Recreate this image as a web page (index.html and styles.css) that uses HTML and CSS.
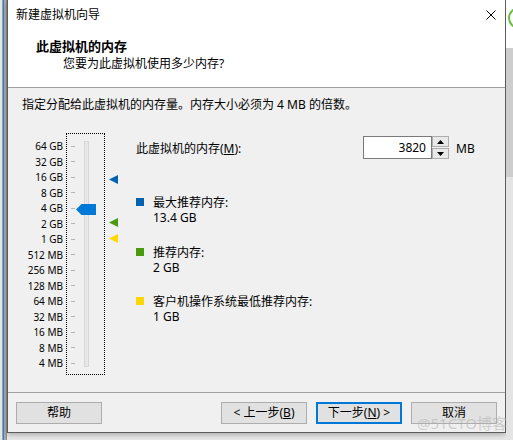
FILE: index.html
```html
<!DOCTYPE html>
<html lang="zh-CN">
<head>
<meta charset="utf-8">
<title>新建虚拟机向导</title>
<link rel="stylesheet" href="styles.css">
</head>
<body>
<div class="screen">
  <div class="edge-left"></div>
  <div class="window">
    <div class="titlebar">
      <span class="title">新建虚拟机向导</span>
      <svg class="close" width="10" height="10" viewBox="0 0 10 10"><path d="M0.5 0.5 L9.5 9.5 M9.5 0.5 L0.5 9.5" stroke="#000" stroke-width="1" fill="none"/></svg>
    </div>
    <div class="header">
      <div class="h-title">此虚拟机的内存</div>
      <div class="h-sub">您要为此虚拟机使用多少内存?</div>
    </div>
    <div class="body">
      <p class="intro">指定分配给此虚拟机的内存量。内存大小必须为 4 MB 的倍数。</p>
      <div class="main">
        <div class="scale">
          <span>64 GB</span><span>32 GB</span><span>16 GB</span><span>8 GB</span><span>4 GB</span>
          <span>2 GB</span><span>1 GB</span><span>512 MB</span><span>256 MB</span><span>128 MB</span>
          <span>64 MB</span><span>32 MB</span><span>16 MB</span><span>8 MB</span><span>4 MB</span>
        </div>
        <div class="slider">
          <div class="ticks">
            <i></i><i></i><i></i><i></i><i></i><i></i><i></i><i></i><i></i><i></i><i></i><i></i><i></i><i></i><i></i>
          </div>
          <div class="track"></div>
          <svg class="thumb" width="20" height="11" viewBox="0 0 20 11"><polygon points="0,5.5 5.5,0 20,0 20,11 5.5,11" fill="#0078d7"/></svg>
          <svg class="marker m-max" width="9" height="9" viewBox="0 0 9 9"><polygon points="0,4.5 9,0 9,9" fill="#0063b1"/></svg>
          <svg class="marker m-rec" width="9" height="9" viewBox="0 0 9 9"><polygon points="0,4.5 9,0 9,9" fill="#4a9a10"/></svg>
          <svg class="marker m-min" width="9" height="9" viewBox="0 0 9 9"><polygon points="0,4.5 9,0 9,9" fill="#ffd800"/></svg>
        </div>
        <div class="info">
          <div class="mem-row">
            <span class="mem-label">此虚拟机的内存(<u>M</u>):</span>
            <span class="mem-input">3820</span>
            <span class="spin">
              <span class="spin-btn"><svg width="7" height="4" viewBox="0 0 7 4"><polygon points="3.5,0 7,4 0,4" fill="#000"/></svg></span>
              <span class="spin-btn"><svg width="7" height="4" viewBox="0 0 7 4"><polygon points="0,0 7,0 3.5,4" fill="#000"/></svg></span>
            </span>
            <span class="mem-unit">MB</span>
          </div>
          <div class="legend l-max">
            <span class="swatch sw-max"></span>
            <div class="legend-text"><div>最大推荐内存:</div><div>13.4 GB</div></div>
          </div>
          <div class="legend l-rec">
            <span class="swatch sw-rec"></span>
            <div class="legend-text"><div>推荐内存:</div><div>2 GB</div></div>
          </div>
          <div class="legend l-min">
            <span class="swatch sw-min"></span>
            <div class="legend-text"><div>客户机操作系统最低推荐内存:</div><div>1 GB</div></div>
          </div>
        </div>
      </div>
    </div>
    <div class="footer">
      <button class="btn">帮助</button>
      <span class="spacer"></span>
      <button class="btn">&lt; 上一步(<u>B</u>)</button>
      <button class="btn btn-default">下一步(<u>N</u>) &gt;</button>
      <button class="btn">取消</button>
    </div>
  </div>
  <div class="edge-right"><span class="ring"></span></div>
  <div class="watermark">@51CTO博客</div>
</div>
</body>
</html>
```

FILE: styles.css
```css
html, body {
  margin: 0;
  padding: 0;
}
body {
  width: 513px;
  height: 440px;
  overflow: hidden;
  background: #e8e8e8;
  font-family: "Noto Sans", "Noto Sans CJK SC", sans-serif;
  font-size: 12px;
  color: #000;
}
.screen {
  position: relative;
  display: flex;
  align-items: flex-start;
  width: 513px;
  height: 440px;
  overflow: hidden;
}
.edge-left {
  width: 7px;
  height: 440px;
  flex: none;
  background: linear-gradient(to right, #e6e6e6 0 2px, #8aa6bf 2px 3px, #3f7fb4 3px 4px, #a9a9a9 4px 6px, #8c8c8c 6px 7px);
}
.window {
  width: 499px;
  height: 433px;
  flex: none;
  box-sizing: border-box;
  border: 1px solid #5c5c5c;
  border-top: none;
  background: #f0f0f0;
  display: flex;
  flex-direction: column;
  box-shadow: 0 2px 5px rgba(0, 0, 0, 0.25);
}
.edge-right {
  position: relative;
  flex: 1;
  height: 440px;
  overflow: hidden;
  background: linear-gradient(to bottom, #ffffff 0 48px, #cdcdcd 48px 177px, #e4e4e4 177px);
}
.ring {
  position: absolute;
  left: 2px;
  top: 7px;
  width: 18px;
  height: 18px;
  border: 2px solid #6abf45;
  border-radius: 50%;
}

/* title bar */
.titlebar {
  height: 30px;
  background: #fff;
  display: flex;
  align-items: center;
  padding: 0 9px 0 8px;
}
.title {
  flex: 1;
  line-height: 30px;
}
.close {
  display: block;
}

/* header */
.header {
  background: #fff;
  border-bottom: 1px solid #a0a0a0;
  padding-top: 8px;
  height: 49px;
}
.h-title {
  font-weight: 700;
  font-size: 13px;
  line-height: 17px;
  padding-left: 28px;
}
.h-sub {
  line-height: 17px;
  padding-left: 55px;
}

/* body */
.body {
  flex: 1;
  padding: 8px 14px 0;
}
.intro {
  margin: 0;
  line-height: 17px;
}
.main {
  display: flex;
  align-items: flex-start;
  margin-top: 20px;
}
.scale {
  width: 41px;
  display: flex;
  flex-direction: column;
  padding-top: 6.25px;
  font-size: 10px;
  text-align: right;
  margin-right: 3px;
}
.scale span {
  display: block;
  height: 15.5px;
  line-height: 15.5px;
}
.slider {
  position: relative;
  width: 39px;
  height: 242px;
  box-sizing: border-box;
  border: 1px dotted #000;
  flex: none;
}
.ticks {
  display: flex;
  flex-direction: column;
  padding-top: 4.25px;
}
.ticks i {
  display: flex;
  align-items: center;
  height: 15.5px;
  padding-left: 4px;
}
.ticks i::before {
  content: "";
  display: block;
  width: 4px;
  height: 1px;
  background: #b5b5b5;
}
.track {
  position: absolute;
  left: 17px;
  top: 7px;
  width: 5px;
  height: 226px;
  box-sizing: border-box;
  border: 1px solid #d6d6d6;
  background: #e7e7e7;
}
.thumb {
  position: absolute;
  left: 9px;
  top: 70px;
  display: block;
}
.marker {
  position: absolute;
  left: 42px;
  display: block;
}
.m-max { top: 41px; }
.m-rec { top: 84px; }
.m-min { top: 100px; }

.info {
  flex: 1;
  margin-left: 31px;
}
.mem-row {
  display: flex;
  align-items: flex-start;
  margin-top: 3px;
  height: 23px;
}
.mem-label {
  width: 227px;
  padding-top: 3px;
  line-height: 20px;
}
.mem-input {
  width: 69px;
  height: 23px;
  box-sizing: border-box;
  border: 1px solid #7a7a7a;
  background: #fff;
  text-align: right;
  padding-right: 5px;
  line-height: 21px;
}
.spin {
  width: 17px;
  height: 23px;
  display: flex;
  flex-direction: column;
  gap: 1px;
}
.spin-btn {
  flex: 1;
  box-sizing: border-box;
  border: 1px solid #adadad;
  background: #e9e9e9;
  display: flex;
  align-items: center;
  justify-content: center;
}
.spin-btn svg {
  display: block;
}
.mem-unit {
  margin-left: 7px;
  padding-top: 3px;
  line-height: 20px;
}
.legend {
  display: flex;
  align-items: flex-start;
  gap: 9px;
}
.l-max { margin-top: 36px; }
.l-rec { margin-top: 20px; }
.l-min { margin-top: 19px; }
.swatch {
  width: 8px;
  height: 8px;
  margin-top: 3px;
  flex: none;
}
.sw-max { background: #0063b1; }
.sw-rec { background: #4a9a10; }
.sw-min { background: #ffd800; }
.legend-text {
  line-height: 15px;
}

/* footer */
.footer {
  border-top: 1px solid #a0a0a0;
  padding: 9px 8px 8px;
  display: flex;
  gap: 9px;
}
.spacer {
  flex: 1;
}
.btn {
  width: 86px;
  height: 22px;
  box-sizing: border-box;
  border: 1px solid #adadad;
  background: #e1e1e1;
  font-family: "Noto Sans", "Noto Sans CJK SC", sans-serif;
  font-size: 12px;
  color: #000;
  padding: 0;
  line-height: 18px;
}
.btn-default {
  border: 2px solid #0078d7;
}
.watermark {
  position: absolute;
  left: 417px;
  top: 413px;
  font-size: 15px;
  line-height: 20px;
  color: rgba(175, 175, 175, 0.55);
  white-space: nowrap;
}
```
